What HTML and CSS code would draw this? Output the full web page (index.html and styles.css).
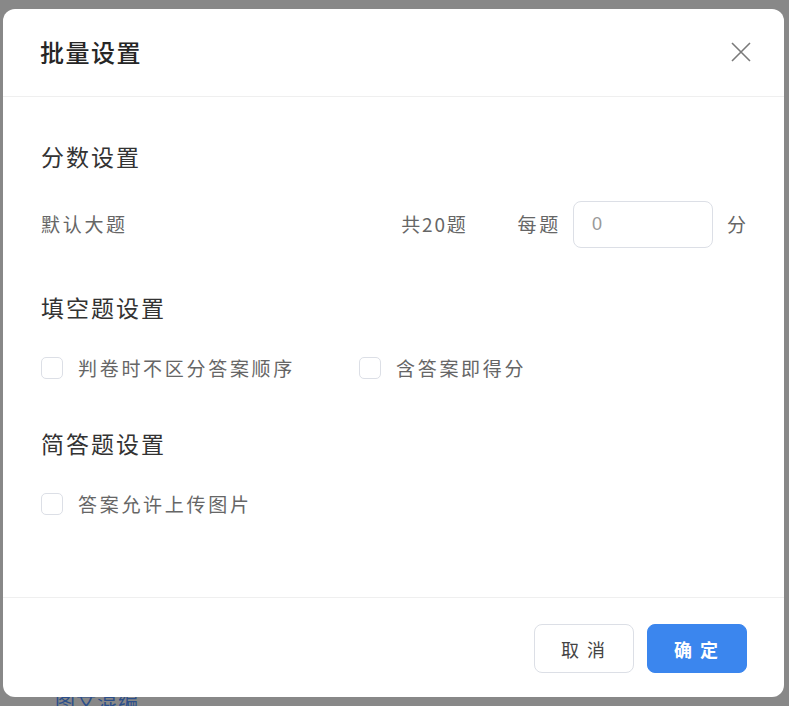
FILE: index.html
```html
<!DOCTYPE html>
<html lang="zh-CN">
<head>
<meta charset="utf-8">
<title>批量设置</title>
<link rel="stylesheet" href="styles.css">
</head>
<body>
<div class="backdrop-text">图文混编</div>
<div class="dialog">
  <div class="dialog-header">
    <h2 class="dialog-title">批量设置</h2>
    <button class="close-btn" aria-label="关闭">
      <svg width="20" height="20" viewBox="0 0 20 20"><path d="M1 1L19 19M19 1L1 19" stroke="#7a7a7a" stroke-width="1.6" fill="none"/></svg>
    </button>
  </div>
  <div class="dialog-body">
    <section class="section section-score">
      <h3 class="section-title">分数设置</h3>
      <div class="score-row">
        <span class="text">默认大题</span>
        <div class="score-right">
          <span class="text total">共20题</span>
          <span class="text each">每题</span>
          <div class="input">0</div>
          <span class="text unit">分</span>
        </div>
      </div>
    </section>
    <section class="section section-fill">
      <h3 class="section-title">填空题设置</h3>
      <div class="check-row">
        <label class="check wide"><span class="box"></span><span class="text">判卷时不区分答案顺序</span></label>
        <label class="check"><span class="box"></span><span class="text">含答案即得分</span></label>
      </div>
    </section>
    <section class="section section-short">
      <h3 class="section-title">简答题设置</h3>
      <div class="check-row">
        <label class="check"><span class="box"></span><span class="text">答案允许上传图片</span></label>
      </div>
    </section>
  </div>
  <div class="dialog-footer">
    <button class="btn btn-default">取 消</button>
    <button class="btn btn-primary">确 定</button>
  </div>
</div>
</body>
</html>
```
FILE: styles.css
```css
html, body {
  margin: 0;
  padding: 0;
}
body {
  width: 789px;
  height: 706px;
  overflow: hidden;
  background: #888888;
  padding: 9px 5px 0 3px;
  box-sizing: border-box;
  font-family: "Noto Sans CJK SC", "Noto Sans", sans-serif;
  position: relative;
}
.backdrop-text {
  position: absolute;
  left: 55px;
  top: 690px;
  font-size: 20px;
  line-height: 24px;
  color: #2c4f8a;
  letter-spacing: 1px;
}
.dialog {
  position: relative;
  width: 781px;
  height: 688px;
  background: #fff;
  border-radius: 12px;
  display: flex;
  flex-direction: column;
}
.dialog-header {
  height: 88px;
  border-bottom: 1px solid #efefef;
  display: flex;
  align-items: center;
  justify-content: space-between;
  padding: 0 33px 0 37px;
  box-sizing: border-box;
}
.dialog-title {
  margin: 0;
  font-size: 24px;
  font-weight: 500;
  color: #262626;
  letter-spacing: 1.5px;
  line-height: 32px;
  padding-bottom: 2px;
}
.close-btn {
  border: none;
  background: none;
  padding: 0;
  width: 20px;
  height: 20px;
  display: flex;
  cursor: pointer;
  margin-bottom: 2px;
}
.dialog-body {
  flex: 1;
  padding: 43px 38px 0 38px;
}
.section-title {
  margin: 0;
  font-size: 23px;
  font-weight: 400;
  color: #333;
  line-height: 32px;
  letter-spacing: 2px;
}
.text {
  font-size: 19px;
  color: #666;
  letter-spacing: 2.7px;
  line-height: 24px;
}
.score-row {
  margin-top: 28px;
  display: flex;
  align-items: center;
  justify-content: space-between;
  height: 48px;
}
.score-right {
  display: flex;
  align-items: center;
}
.score-right .total {
  margin-right: 50px;
  letter-spacing: 1.8px;
}
.score-right .each {
  letter-spacing: 2.7px;
}
.input {
  width: 140px;
  height: 47px;
  box-sizing: border-box;
  border: 1px solid #dcdfe6;
  border-radius: 8px;
  margin-left: 12px;
  padding-left: 18px;
  display: flex;
  align-items: center;
  font-size: 18px;
  color: #999;
  font-family: "Liberation Sans", "Noto Sans", sans-serif;
}
.unit {
  margin-left: 14px;
  letter-spacing: 0;
}
.section-fill {
  margin-top: 43px;
}
.section-short {
  margin-top: 47px;
}
.check-row {
  margin-top: 33px;
  display: flex;
  align-items: center;
  height: 24px;
}
.check {
  display: flex;
  align-items: center;
}
.check.wide {
  margin-right: 64px;
}
.box {
  width: 22px;
  height: 22px;
  box-sizing: border-box;
  border: 1px solid #dcdfe6;
  border-radius: 5px;
  margin-right: 15px;
}
.dialog-footer {
  height: 100px;
  border-top: 1px solid #efefef;
  box-sizing: border-box;
  display: flex;
  justify-content: flex-end;
  gap: 13px;
  padding: 26px 37px 0 0;
}
.btn {
  width: 100px;
  height: 49px;
  border-radius: 8px;
  font-family: "Noto Sans CJK SC", sans-serif;
  font-size: 18px;
  letter-spacing: 2px;
  cursor: pointer;
}
.btn-default {
  background: #fff;
  border: 1px solid #dcdfe6;
  color: #444;
}
.btn-primary {
  background: #3b86ee;
  border: 1px solid #3b86ee;
  color: #fff;
  font-weight: 600;
}
```
